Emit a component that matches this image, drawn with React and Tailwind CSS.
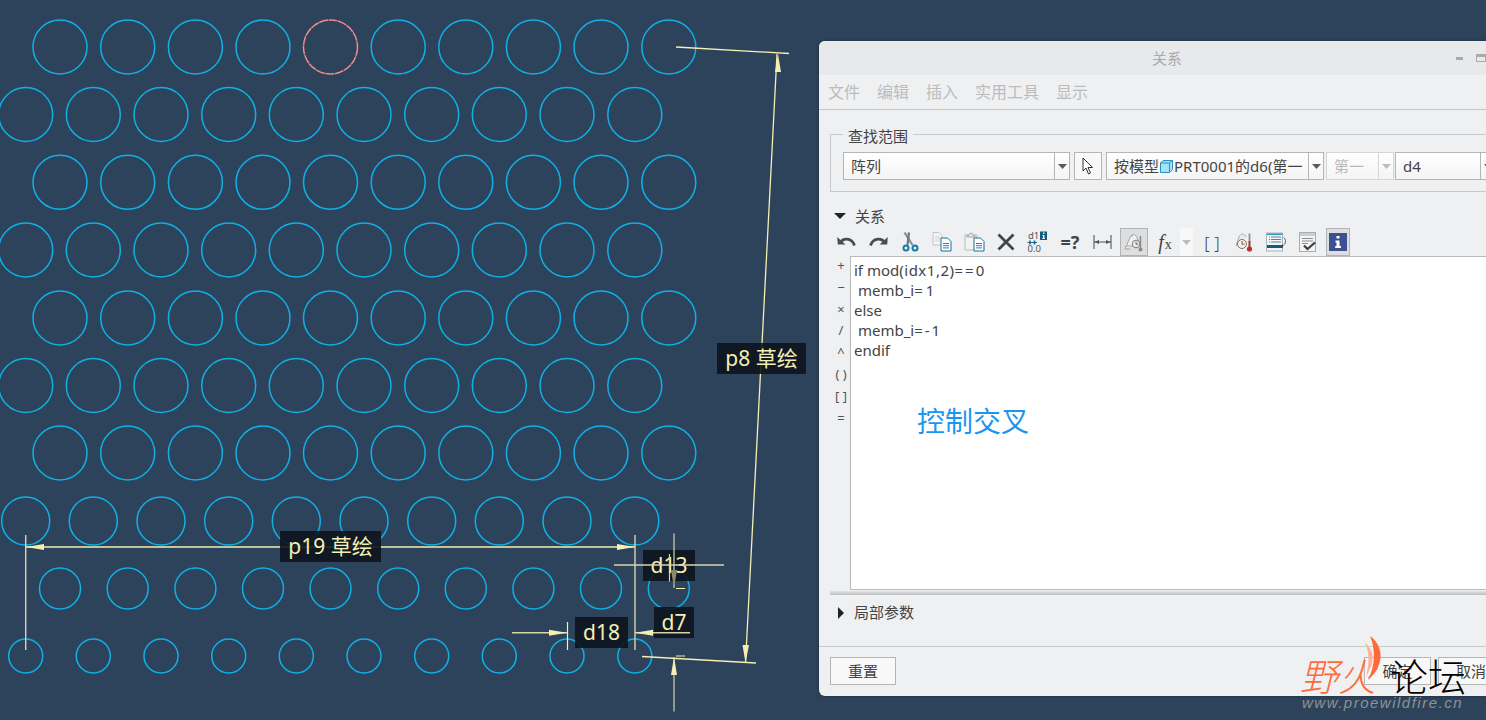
import { Fragment } from 'react';

const ROW_A = [60, 127.7, 195.4, 263, 330.5, 398.2, 465.8, 533.4, 601, 668.8];
const ROW_B = [25.7, 93.3, 161, 228.7, 296.3, 364, 431.7, 499.3, 567, 634.8];

const CIRCLE_ROWS = [
    { y: 47, r: 27, xs: ROW_A },
    { y: 114.5, r: 27, xs: ROW_B },
    { y: 182.3, r: 27, xs: ROW_A },
    { y: 250, r: 27, xs: ROW_B },
    { y: 318, r: 27, xs: ROW_A },
    { y: 385.5, r: 27, xs: ROW_B },
    { y: 453, r: 27, xs: ROW_A },
    { y: 521, r: 24, xs: ROW_B },
    { y: 588.5, r: 20.5, xs: ROW_A },
    { y: 656, r: 17, xs: ROW_B },
];

const DIM = '#f5efb2';
const DIM_SOFT = '#d8d5aa';

function Arrow({ points }) {
    return <polygon points={points} fill={DIM} />;
}

function Sketch() {
    return (
        <svg className="absolute inset-0" width="1486" height="720" viewBox="0 0 1486 720" fill="none">
            {CIRCLE_ROWS.map((row) => (
                <Fragment key={row.y}>
                    {row.xs.map((x) => {
                        const picked = row.y === 47 && x === 330.5;
                        return (
                            <circle
                                key={x}
                                cx={x}
                                cy={row.y}
                                r={row.r}
                                stroke={picked ? '#f08a8c' : '#0fb0e6'}
                                strokeWidth="1.5"
                                strokeDasharray={picked ? '9 0.6' : undefined}
                            />
                        );
                    })}
                </Fragment>
            ))}
        </svg>
    );
}

function Dimensions() {
    return (
        <svg className="absolute inset-0" width="1486" height="720" viewBox="0 0 1486 720" fill="none">
            {/* p8 */}
            <path d="M676 47L789 53.5" stroke={DIM} strokeWidth="1.3" />
            <path d="M777 54L745.5 663" stroke={DIM} strokeWidth="1.3" />
            <Arrow points="778,54 775,72 781,72" />
            <Arrow points="745.5,663 742.5,645 749,645" />
            <path d="M642 656.5L756 663" stroke={DIM} strokeWidth="1.3" />
            {/* p19 */}
            <path d="M26 547H635" stroke={DIM} strokeWidth="1.3" />
            <path d="M25.7 535V650" stroke={DIM_SOFT} strokeWidth="1.4" />
            <path d="M635 535V650" stroke={DIM_SOFT} strokeWidth="1.4" />
            <Arrow points="26,547 44,544 44,550" />
            <Arrow points="635,547 617,544 617,550" />
            {/* d18 */}
            <path d="M512 632.7H567" stroke={DIM_SOFT} strokeWidth="1.4" />
            <path d="M567.5 622V650" stroke={DIM} strokeWidth="1.2" />
            <Arrow points="567,632.7 549,629.7 549,635.7" />
        </svg>
    );
}

function DimensionsOver() {
    return (
        <svg className="absolute inset-0" width="1486" height="720" viewBox="0 0 1486 720" fill="none">
            {/* d7 */}
            <path d="M635 632.7H690" stroke={DIM_SOFT} strokeWidth="1.4" />
            <Arrow points="635,632.7 653,629.7 653,635.7" />
            {/* d13 */}
            <path d="M614 565H724" stroke={DIM_SOFT} strokeWidth="1.4" />
            <path d="M674 533.5V588" stroke={DIM_SOFT} strokeWidth="1.2" />
            <path d="M669.5 554V581.5" stroke={DIM_SOFT} strokeWidth="1.2" />
            <polygon points="674,588 671,570 677,570" fill="#8c8a6c" />
            <path d="M676 588.5H685" stroke={DIM} strokeWidth="1" />
            {/* lower */}
            <path d="M674 711.5V657" stroke={DIM_SOFT} strokeWidth="1.2" />
            <Arrow points="674,657 671,675 677,675" />
            <path d="M676 656H685" stroke={DIM} strokeWidth="1" />
        </svg>
    );
}

function DimLabel({ className, children }) {
    return (
        <div
            className={`absolute flex items-center justify-center bg-[#0d141e]/90 text-[21px] leading-none text-[#f5efb2] ${className}`}
        >
            {children}
        </div>
    );
}

function Arrowhead({ disabled }) {
    return (
        <svg width="9" height="5" viewBox="0 0 9 5">
            <path d="M0 0H9L4.5 5Z" fill={disabled ? '#bdbdbd' : '#5a5a5a'} />
        </svg>
    );
}

function Combo({ className, arrowWidth = 'w-[15px]', disabled, children }) {
    return (
        <div
            className={`flex h-[28px] shrink-0 items-center border bg-gradient-to-b from-white to-[#f4f4f4] ${
                disabled ? 'border-[#d6d6d6] text-[#b9b9b9]' : 'border-[#b5b5b5] text-[#444]'
            } ${className}`}
        >
            <div className="flex min-w-0 flex-1 items-center overflow-hidden whitespace-nowrap pl-[7px] text-[15px]">
                {children}
            </div>
            <div
                className={`flex h-full shrink-0 items-center justify-center border-l ${arrowWidth} ${
                    disabled ? 'border-[#d6d6d6]' : 'border-[#b5b5b5]'
                }`}
            >
                <Arrowhead disabled={disabled} />
            </div>
        </div>
    );
}

function ToolCell({ className = 'w-[32px]', children }) {
    return <div className={`flex h-[28px] shrink-0 items-center justify-center ${className}`}>{children}</div>;
}

function UndoIcon({ flip }) {
    return (
        <svg width="19" height="13" viewBox="0 0 19 13" fill="none" className={flip ? '-scale-x-100' : ''}>
            <path d="M3 7.5C5 2 14.5 0.5 17.5 9.5" stroke="#4d4d4d" strokeWidth="2.8" />
            <path d="M0.2 1L8.5 8.5H0.8Z" fill="#4d4d4d" />
        </svg>
    );
}

function ScissorsIcon() {
    return (
        <svg width="17" height="20" viewBox="0 0 17 20" fill="none">
            <path d="M2.5 0.5L10.5 13" stroke="#8a8f94" strokeWidth="2.2" />
            <path d="M7 0.5L5.5 13" stroke="#6f767c" strokeWidth="2.2" />
            <circle cx="4" cy="16" r="2.5" stroke="#1c79a6" strokeWidth="2" />
            <circle cx="13" cy="16" r="2.5" stroke="#1c79a6" strokeWidth="2" />
        </svg>
    );
}

function SmallDoc({ x, y }) {
    return (
        <g transform={`translate(${x} ${y})`}>
            <path d="M0.5 0.5H7L10.5 4V13.5H0.5Z" fill="#fff" stroke="#1d6f96" />
            <path d="M2.5 6H8.5M2.5 8.2H8.5M2.5 10.4H8.5" stroke="#2a84ad" />
        </g>
    );
}

function CopyIcon() {
    return (
        <svg width="20" height="20" viewBox="0 0 20 20" fill="none">
            <path d="M1 0.5H7L10 3.5V13H1Z" fill="#f4f4f4" stroke="#c4c4c4" />
            <path d="M3 5H8M3 7H8M3 9H8" stroke="#d4d4d4" />
            <SmallDoc x={8.5} y={5.5} />
        </svg>
    );
}

function PasteIcon() {
    return (
        <svg width="21" height="20" viewBox="0 0 21 20" fill="none">
            <path d="M1 3H13V18H1Z" fill="#f3f3f3" stroke="#b9b9b9" />
            <path d="M4.5 3.5C4.5 0.5 9.5 0.5 9.5 3.5H11V5H3V3.5Z" fill="#e4e4e4" stroke="#a5a5a5" />
            <SmallDoc x={9.5} y={5.5} />
        </svg>
    );
}

function DeltaIcon() {
    return (
        <svg width="22" height="22" viewBox="0 0 22 22" fill="none" className="overflow-visible">
            <text x="1" y="8" fontSize="9.5" fill="#555">
                d1
            </text>
            <text x="0.5" y="21" fontSize="9.5" fill="#555">
                0.0
            </text>
            <path d="M0.5 11.5H10" stroke="#16688f" strokeWidth="1.1" />
            <path d="M3 9.5V13.5M7.5 9.5V13.5" stroke="#16688f" strokeWidth="1.6" />
            <rect x="13" y="0.5" width="7" height="8.5" fill="#0f5d82" />
            <path d="M16 1.5H17.4V2.9H16ZM15.4 4H17.4V7.2H18V8H15.2V7.2H16V4.8H15.4Z" fill="#fff" />
        </svg>
    );
}

function DimIcon() {
    return (
        <svg width="19" height="14" viewBox="0 0 19 14" fill="none">
            <path d="M1 0V14M18 0V14" stroke="#555" strokeWidth="1.1" />
            <path d="M1 7H18" stroke="#555" />
            <path d="M1.5 7L6 5V9ZM17.5 7L13 5V9Z" fill="#555" />
        </svg>
    );
}

function WeighIcon() {
    return (
        <svg width="21" height="21" viewBox="0 0 21 21" fill="none">
            <path d="M1 17L6 5.5C8 1.5 11 1.5 13 5.5L15 11" fill="#f0f0f0" stroke="#a2a2a2" />
            <path d="M6 17H1M8 5V2.5M2 14H8" stroke="#a2a2a2" />
            <circle cx="12" cy="12" r="3.8" fill="#e9e9e9" stroke="#7d7d7d" />
            <path d="M12 9.8V12.2H14" stroke="#666" />
            <path d="M16.5 4V17" stroke="#8a8a8a" strokeWidth="1.5" />
            <circle cx="16.5" cy="17.5" r="2" fill="#8a8a8a" />
        </svg>
    );
}

function ThermoIcon() {
    return (
        <svg width="18" height="21" viewBox="0 0 18 21" fill="none">
            <path d="M1 14L4 5C6 1 9 1 11 5" fill="#ececec" stroke="#a8a8a8" />
            <circle cx="7" cy="12" r="4.5" fill="#f4efe9" stroke="#8e6a5c" />
            <path d="M7 9V12.2H9.5" stroke="#7c5c50" />
            <path d="M14.5 1.5V15" stroke="#8f8f8f" strokeWidth="1.8" />
            <path d="M14.5 9V15" stroke="#b33b33" strokeWidth="1.8" />
            <circle cx="14.5" cy="17" r="2.6" fill="#b8322b" />
        </svg>
    );
}

function ListIcon() {
    return (
        <svg width="21" height="20" viewBox="0 0 21 20" fill="none">
            <rect x="0.5" y="1" width="16" height="18" fill="#f2f4f6" stroke="#a9b4bd" />
            <rect x="1" y="1.5" width="15.5" height="1.5" fill="#2a93bf" />
            <rect x="1" y="13" width="15.5" height="3" fill="#0f5d82" />
            <path d="M5 5H15M5 7.5H15M5 10H15" stroke="#6d7c88" />
            <path d="M3 5H4M3 7.5H4M3 10H4" stroke="#2a93bf" />
            <path d="M17.5 5.5C20.5 7.5 20.5 12 16 14" stroke="#56626c" />
            <path d="M14 14L17 12.5V16Z" fill="#3e4850" />
        </svg>
    );
}

function CheckIcon() {
    return (
        <svg width="18" height="20" viewBox="0 0 18 20" fill="none">
            <rect x="0.5" y="0.5" width="16" height="19" fill="#f4f4f4" stroke="#a9adb0" />
            <rect x="1" y="1" width="15" height="3" fill="#c6d0d6" />
            <path d="M3 6.5H14M3 9H14M3 11.5H9" stroke="#8b9096" />
            <path d="M5 13.5L8.5 17L16 10.5" stroke="#3e3e3e" strokeWidth="2.2" />
        </svg>
    );
}

function Toolbar() {
    return (
        <div className="flex h-[28px] items-center pl-[11px]">
            <ToolCell>
                <UndoIcon />
            </ToolCell>
            <ToolCell>
                <UndoIcon flip />
            </ToolCell>
            <ToolCell>
                <ScissorsIcon />
            </ToolCell>
            <ToolCell>
                <CopyIcon />
            </ToolCell>
            <ToolCell>
                <PasteIcon />
            </ToolCell>
            <ToolCell>
                <svg width="18" height="18" viewBox="0 0 18 18" fill="none">
                    <path d="M1.5 1.5L16.5 16.5M16.5 1.5L1.5 16.5" stroke="#444" strokeWidth="2.8" />
                </svg>
            </ToolCell>
            <ToolCell>
                <DeltaIcon />
            </ToolCell>
            <ToolCell>
                <span className="text-[18px] font-bold leading-none text-[#444]">=?</span>
            </ToolCell>
            <ToolCell>
                <DimIcon />
            </ToolCell>
            <ToolCell className="ml-[2px] w-[28px] border border-[#b1b3b5] bg-[#dcdee0]">
                <WeighIcon />
            </ToolCell>
            <ToolCell className="ml-[2px] w-[30px]">
                <span className="font-['Liberation_Serif',serif] text-[20px] italic leading-none text-[#444]">
                    f<span className="ml-px text-[14px] not-italic">x</span>
                </span>
            </ToolCell>
            <ToolCell className="w-[13px] bg-[#f8f8f8]">
                <Arrowhead disabled />
            </ToolCell>
            <ToolCell className="ml-[3px] w-[32px]">
                <span className="text-[17px] font-light leading-none text-[#444]">[ ]</span>
            </ToolCell>
            <ToolCell>
                <ThermoIcon />
            </ToolCell>
            <ToolCell>
                <ListIcon />
            </ToolCell>
            <ToolCell>
                <CheckIcon />
            </ToolCell>
            <ToolCell className="ml-[2px] h-[24px] w-[24px] border border-[#b1b3b5] bg-[#dcdee0]">
                <svg width="18" height="18" viewBox="0 0 18 18">
                    <rect width="18" height="18" fill="#3d5090" />
                    <path d="M7.5 3H10.5V5.6H7.5ZM6.5 7.5H10.5V13H12V15H6.2V13H7.5V9.5H6.5Z" fill="#fff" />
                </svg>
            </ToolCell>
        </div>
    );
}

function Dialog() {
    const ops = ['+', '−', '×', '/', '^', '( )', '[ ]', '='];
    return (
        <div className="absolute left-[819px] top-[41px] flex h-[655px] w-[696px] flex-col overflow-hidden rounded-[6px] bg-[#eff0f2] font-['Noto_Sans','Noto_Sans_CJK_SC',sans-serif] shadow-[0_0_3px_rgba(0,0,0,0.35)]">
            <div className="grid h-[34px] shrink-0 grid-cols-[1fr_auto_1fr] items-center bg-[#e8e9eb] text-[15px] text-[#a9aaac]">
                <div />
                <div>关系</div>
                <div className="flex items-center justify-end gap-[13px] pr-[29px]">
                    <span className="h-[3px] w-[7px] bg-[#a8a9ab]" />
                    <span className="h-[8px] w-[10px] border border-t-[3px] border-[#a8a9ab]" />
                </div>
            </div>
            <div className="flex h-[35px] shrink-0 items-center gap-[17px] border-b border-[#c5c6c8] pl-[9px] text-[16px] text-[#bbbcbe]">
                <span>文件</span>
                <span>编辑</span>
                <span>插入</span>
                <span>实用工具</span>
                <span>显示</span>
            </div>
            <fieldset className="mx-[11px] mt-[13px] border border-[#c8c9cb] pb-[11px] pl-[12px] pt-[6px]">
                <legend className="px-[5px] pt-[3px] text-[15px] leading-[20px] text-[#444]">查找范围</legend>
                <div className="flex">
                    <Combo className="w-[227px]">阵列</Combo>
                    <div className="ml-[4px] flex h-[28px] w-[28px] shrink-0 items-center justify-center border border-[#b5b5b5] bg-[#f8f8f8]">
                        <svg width="12" height="18" viewBox="0 0 12 18" fill="none">
                            <path d="M1 1V14L4 11L6.5 17L8.5 16L6 10.5H10.5Z" fill="#fff" stroke="#333" />
                        </svg>
                    </div>
                    <Combo className="ml-[4px] w-[218px]">
                        按模型
                        <svg className="mx-px shrink-0" width="13" height="13" viewBox="0 0 13 13">
                            <path d="M3 0.5H12.5V9.5L9.5 12.5H0.5V3Z" fill="#a4e3f7" stroke="#2b8fc0" />
                            <path d="M0.5 3H9.5V12.5M9.5 3L12.5 0.5" fill="none" stroke="#2b8fc0" />
                        </svg>
                        PRT0001的d6(第一
                    </Combo>
                    <Combo className="ml-[2px] w-[68px]" disabled>
                        第一
                    </Combo>
                    <Combo className="ml-px w-[102px]" arrowWidth="w-[16px]">
                        d4
                    </Combo>
                </div>
            </fieldset>
            <div className="mt-[14px] flex h-[20px] shrink-0 items-center pl-[15px] text-[15px] text-[#444]">
                <svg width="12" height="6" viewBox="0 0 12 6">
                    <path d="M0 0H12L6 6Z" fill="#222" />
                </svg>
                <span className="ml-[9px]">关系</span>
            </div>
            <div className="mt-[2px]">
                <Toolbar />
            </div>
            <div className="flex h-[334px] shrink-0">
                <div className="-mt-px flex w-[31px] shrink-0 flex-col items-center pl-[13px] text-[13px] leading-[21.8px] text-[#555]">
                    {ops.map((op) => (
                        <span key={op} className="whitespace-nowrap">
                            {op}
                        </span>
                    ))}
                </div>
                <div className="relative flex-1 whitespace-pre border border-r-0 border-[#b9babc] bg-white pl-[3px] pt-[3px] text-[15px] leading-[20px] text-[#444]">
                    <div>
                        if mod<span className="tracking-[0.5px]">(idx1,2)</span>
                        <span className="tracking-[2px]">==0</span>
                    </div>
                    <div>
                        {' memb_i'}
                        <span className="tracking-[3px]">=1</span>
                    </div>
                    <div>else</div>
                    <div>
                        {' memb_i'}
                        <span className="tracking-[2px]">=-1</span>
                    </div>
                    <div>endif</div>
                </div>
            </div>
            <div className="mx-[11px] mt-px h-[4px] shrink-0 bg-gradient-to-b from-[#e2e3e5] to-[#bcbec0]" />
            <div className="mx-[11px] flex h-[35px] shrink-0 items-center pl-[8px] text-[15px] text-[#444]">
                <svg width="6" height="12" viewBox="0 0 6 12">
                    <path d="M0 0L6 6L0 12Z" fill="#222" />
                </svg>
                <span className="ml-[10px]">局部参数</span>
            </div>
            <div className="mt-[16px] flex flex-1 items-start justify-between border-t border-[#c8c9cb] px-[11px] pt-[10px] text-[15px] text-[#444]">
                <div className="flex h-[28px] w-[66px] items-center justify-center border border-[#b5b5b5] bg-[#f8f8f8]">
                    重置
                </div>
                <div className="flex gap-[7px]">
                    <div className="flex h-[28px] w-[67px] items-center justify-center border border-[#b5b5b5] bg-[#f8f8f8]">
                        确定
                    </div>
                    <div className="flex h-[28px] w-[66px] items-center justify-center border border-[#b5b5b5] bg-[#f8f8f8]">
                        取消
                    </div>
                </div>
            </div>
        </div>
    );
}

export default function App() {
    return (
        <div className="relative h-[720px] w-[1486px] overflow-hidden bg-[#2d435b] font-['Noto_Sans','Noto_Sans_CJK_SC',sans-serif]">
            <Sketch />
            <Dimensions />
            <DimLabel className="left-[280px] top-[531px] h-[31px] w-[101px]">p19 草绘</DimLabel>
            <DimLabel className="left-[717px] top-[343px] h-[31px] w-[89px]">p8 草绘</DimLabel>
            <DimLabel className="left-[575px] top-[617px] h-[31px] w-[53px]">d18</DimLabel>
            <DimLabel className="left-[654px] top-[607px] h-[31px] w-[40px]">d7</DimLabel>
            <DimLabel className="left-[643px] top-[550px] h-[31px] w-[52px]">d13</DimLabel>
            <DimensionsOver />
            <Dialog />
            <div className="absolute left-[917px] top-[402px] text-[28px] leading-[38px] text-[#1b96f0]">控制交叉</div>
            <div className="absolute left-[1300px] top-[636px] h-[84px] w-[170px]">
                <svg className="absolute left-[62px] top-0" width="22" height="46" viewBox="0 0 22 46">
                    <path d="M8 0C21 9 24 28 6 44C13 30 14 14 8 0Z" fill="#ff6a3a" />
                    <path d="M3 7C12 14 14 26 4 40C7 28 8 18 3 7Z" fill="#ffb59a" />
                </svg>
                <div className="absolute left-0 top-[17px] whitespace-nowrap text-[38px] font-light italic leading-[46px] text-[#ff6a3a]">
                    野火
                </div>
                <div className="absolute left-[90px] top-[17px] whitespace-nowrap text-[38px] font-light leading-[46px] text-black">
                    论坛
                </div>
                <div className="absolute left-[2px] top-[59px] whitespace-nowrap font-['Liberation_Sans',sans-serif] text-[15px] italic leading-[16px] tracking-[1.5px] text-[#8e9299]">
                    www.proewildfire.cn
                </div>
            </div>
        </div>
    );
}
